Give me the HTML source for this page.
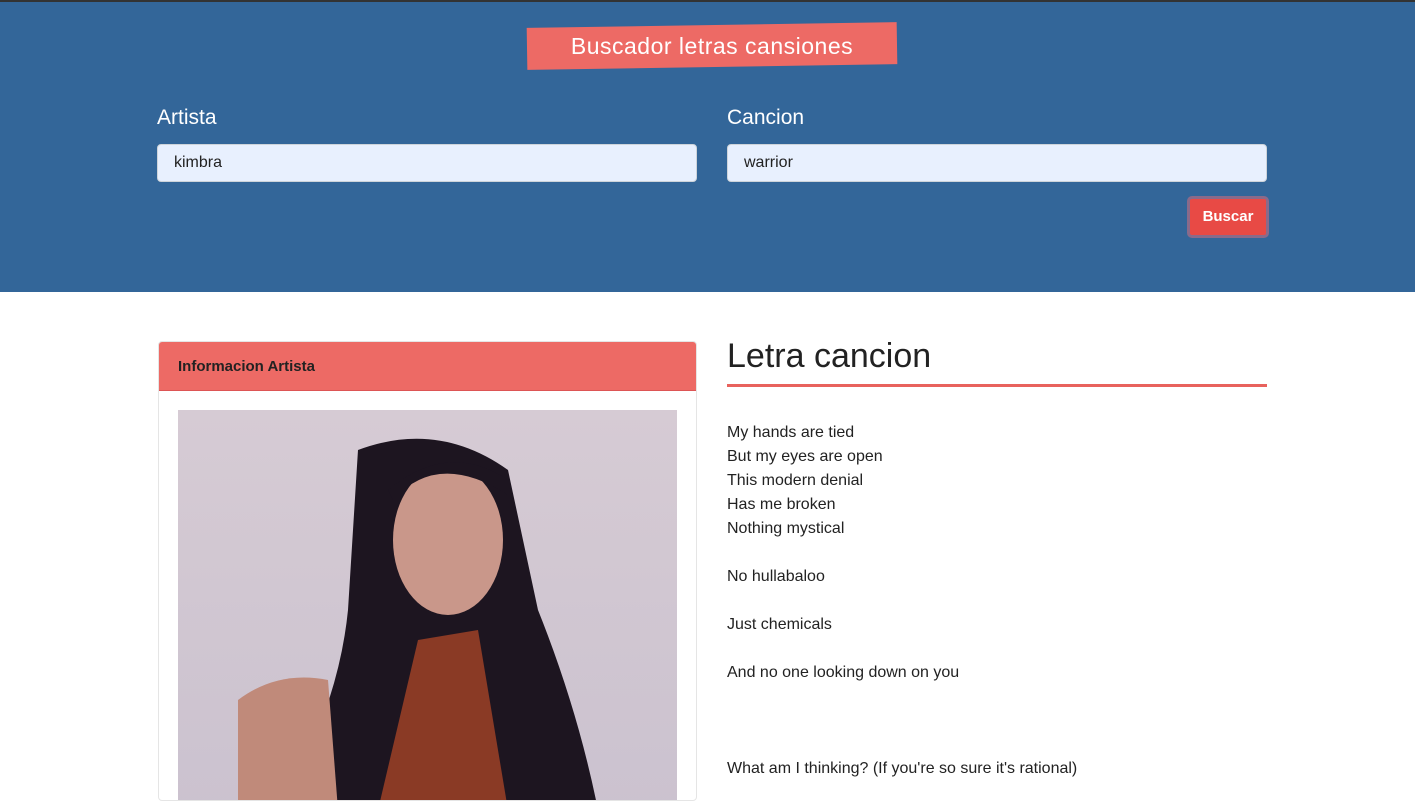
<!DOCTYPE html>
<html><head><meta charset="utf-8"><style>
*{box-sizing:border-box;margin:0;padding:0}
body{width:1415px;height:786px;overflow:hidden;font-family:"Liberation Sans",sans-serif;background:#fff;color:#212529}
.top{height:292px;background:#336699;border-top:2px solid #333;position:relative}
.title{position:absolute;left:527px;top:23px;width:370px;height:42px;background:#ed6a65;transform:rotate(-0.9deg)}
.title span{display:block;transform:rotate(0.9deg);color:#fff;font-size:23px;text-align:center;line-height:42px;letter-spacing:.5px}
.lbl{position:absolute;top:104px;color:#fff;font-size:21px}
.inp{position:absolute;top:142px;width:540px;height:38px;background:#e8f0fe;border:1px solid #ced4da;border-radius:4px;padding-left:16px;line-height:36px;font-size:16px;color:#222}
.btn{position:absolute;left:1187px;top:194px;width:82px;height:42px;background:#e84a45;border:3px solid #8a6a8a;border-radius:5px;color:#fff;font-weight:bold;font-size:15px;text-align:center;line-height:36px}
.card{position:absolute;left:158px;top:341px;width:539px;height:460px;border:1px solid #e5e5e5;border-radius:4px;overflow:hidden}
.ch{height:49px;background:#ed6a65;padding-left:19px;line-height:49px;font-weight:bold;font-size:15px;color:#222;border-bottom:1px solid #d55}
.photo{position:absolute;left:19px;top:68px;width:499px;height:400px;background:linear-gradient(#d6cbd4,#cbc2cf)}
h2{position:absolute;left:727px;top:337px;font-size:34px;font-weight:normal;color:#222}
.line{position:absolute;left:727px;top:384px;width:540px;height:3px;background:#e8625d}
.lyr{position:absolute;left:727px;top:421px;font-size:16px;line-height:24px;color:#222}
</style></head><body>
<div class="top">
<div class="title"><span>Buscador letras cansiones</span></div>
<div class="lbl" style="left:157px">Artista</div>
<div class="lbl" style="left:727px">Cancion</div>
<div class="inp" style="left:157px">kimbra</div>
<div class="inp" style="left:727px">warrior</div>
<div class="btn">Buscar</div>
</div>
<div class="card"><div class="ch">Informacion Artista</div>
<div class="photo">
<svg width="499" height="400" viewBox="0 0 499 400">
<path d="M180 40 Q260 10 330 60 L360 200 Q400 300 420 400 L100 400 Q160 300 170 200 Z" fill="#1d1520"/>
<ellipse cx="270" cy="130" rx="55" ry="75" fill="#c9978a"/>
<path d="M215 90 Q260 40 330 85 L330 70 Q270 30 210 80Z" fill="#1d1520"/>
<path d="M240 230 L300 220 L330 400 L200 400 Z" fill="#8a3a25"/>
<path d="M60 290 Q100 260 150 270 L160 400 L60 400Z" fill="#c08a7a"/>
</svg></div></div>
<h2>Letra cancion</h2><div class="line"></div>
<div class="lyr">My hands are tied<br>But my eyes are open<br>This modern denial<br>Has me broken<br>Nothing mystical<br><br>No hullabaloo<br><br>Just chemicals<br><br>And no one looking down on you<br><br><br><br>What am I thinking? (If you're so sure it's rational)</div>
</body></html>
